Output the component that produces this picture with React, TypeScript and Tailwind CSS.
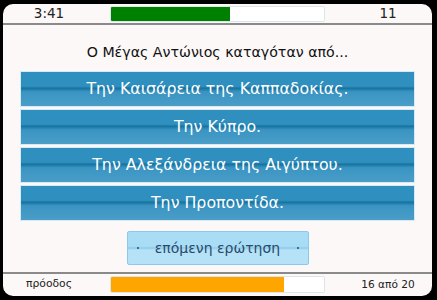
export default function App() {
  const answers = [
    "Την Καισάρεια της Καππαδοκίας.",
    "Την Κύπρο.",
    "Την Αλεξάνδρεια της Αιγύπτου.",
    "Την Προποντίδα.",
  ];
  return (
    <div className="w-[437px] h-[300px] bg-black pl-[3px] pr-[5px] pt-[4px] pb-[4px]" style={{ fontFamily: '"DejaVu Sans", sans-serif' }}>
      <div className="w-full h-full bg-[#fdf8f8] rounded-[10px] flex flex-col overflow-hidden">
        <div className="h-[21px] flex items-center border-b-2 border-[#8a8a8a] shrink-0">
          <div className="w-[92px] mr-[15px] text-center text-[13.5px] text-[#222] leading-none">3:41</div>
          <div className="w-[215px] h-[16px] bg-white border border-[#dde4ea] rounded-[2px] overflow-hidden">
            <div className="h-full w-[119px] bg-[#008000]" />
          </div>
          <div className="flex-1 ml-[19px] text-center text-[13.5px] text-[#222] leading-none">11</div>
        </div>
        <div className="flex-1 flex flex-col items-center">
          <div className="text-[14.2px] text-[#111] mt-[18px] h-[18px] leading-[18px]">Ο Μέγας Αντώνιος καταγόταν από...</div>
          <div className="mt-[10px] w-[395px] flex flex-col gap-[2px]">
            {answers.map((a) => (
              <div key={a} className="relative h-[36px] border border-[#d6eaf4] flex items-center justify-center text-white text-[15.8px]"
                style={{ background: "linear-gradient(to bottom, #2f8fbf 0%, #2f8fbf 42%, #17739f 48%, #3a94c2 58%, #4a9ec8 100%)" }}>
                {a}
              </div>
            ))}
          </div>
          <div className="mt-[10px] w-[182px] h-[34px] border border-[#8cc8ec] rounded-[2px] flex items-center justify-between px-[9px] text-[#2a4a6c] text-[14px]"
            style={{ background: "linear-gradient(to bottom, #a9dcf5 0%, #a9dcf5 45%, #8ccce9 50%, #b5e2f7 56%, #b5e2f7 100%)" }}>
            <span className="w-[2px] h-[2px] bg-[#2a4a6c] rounded-full" />
            <span>επόμενη ερώτηση</span>
            <span className="w-[2px] h-[2px] bg-[#2a4a6c] rounded-full" />
          </div>
        </div>
        <div className="h-[24px] flex items-center border-t-2 border-[#8a8a8a] shrink-0 pb-[1px]">
          <div className="w-[92px] mr-[15px] text-center text-[10.8px] text-[#222]">πρόοδος</div>
          <div className="w-[215px] h-[17px] bg-white border border-[#dde4ea] rounded-[2px] overflow-hidden">
            <div className="h-full w-[173px] bg-[#ffa500]" />
          </div>
          <div className="flex-1 ml-[19px] text-center text-[10.6px] text-[#222]">16 από 20</div>
        </div>
      </div>
    </div>
  );
}
